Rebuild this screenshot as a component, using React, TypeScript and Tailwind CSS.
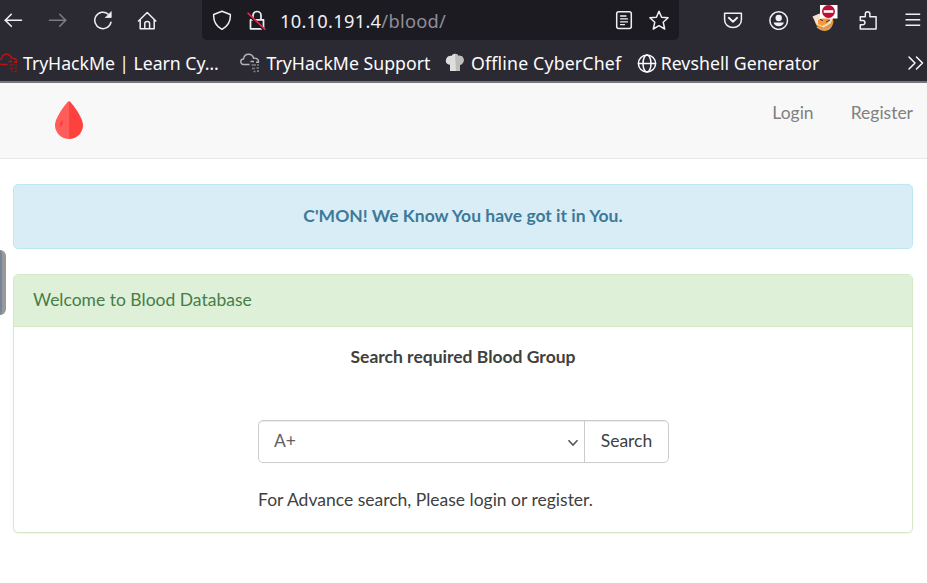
import type { ReactNode } from "react";

function Glyph({ children, className = "" }: { children: ReactNode; className?: string }) {
  return (
    <svg
      viewBox="0 0 20 20"
      fill="none"
      stroke="currentColor"
      strokeWidth="1.5"
      strokeLinecap="round"
      strokeLinejoin="round"
      className={`size-5 shrink-0 ${className}`}
    >
      {children}
    </svg>
  );
}

function Toolbar() {
  return (
    <div className="flex h-10 items-center pl-[3px] text-[#f0f0f4]">
      <Glyph>
        <path d="M18.5 10.3H2M8.300 4.300l-6 6 6 6" strokeWidth="1.6" />
      </Glyph>
      <Glyph className="ml-[25px] text-[#7d7b86]">
        <path d="M1.5 10.3H18M11.700 4.300l6 6-6 6" strokeWidth="1.6" />
      </Glyph>
      <Glyph className="ml-[25px]">
        <path d="M15.3 4.2A8.2 8.2 0 1 0 18 12.2" />
        <path d="M18.2 2v5.500h-5.500z" fill="currentColor" strokeWidth="0.8" />
      </Glyph>
      <Glyph className="ml-[24px]">
        <path d="M1.5 11 10.2 2.500l8.6 8.500M3.2 9.800v9h14v-9M7.800 18.600v-5.200c0-1.2.9-2 2.400-2s2.400.8 2.400 2v5.200" />
      </Glyph>
      <div className="ml-[45px] flex h-10 w-[477px] items-center rounded-b-[5px] bg-[#1c1b22] pl-[10px]">
        <Glyph>
          <path d="M10 1.2 18.300 4.5c.4 5.6-1.4 11-8.300 14.900C3.100 15.500 1.300 10.100 1.700 4.500Z" />
        </Glyph>
        <Glyph className="ml-[15px]">
          <path d="M6 9.300V5.500a4 4 0 0 1 8 0v3.800M3.500 9.800h13v9h-13z" strokeWidth="1.700" />
          <path d="M1 4.100 17 19.800" stroke="#1c1b22" strokeWidth="2.400" />
          <path d="M1 3.200 18 19.300" stroke="#e22850" strokeWidth="1.600" />
        </Glyph>
        <span className="mt-px ml-[13px] w-[334px] whitespace-nowrap text-[18.300px] tracking-[0.270px]">
          10.10.191.4<span className="text-[#8f8d98]">/blood/</span>
        </span>
        <Glyph>
          <rect x="2.700" y="1.800" width="14.600" height="16.700" rx="2" />
          <path d="M6.500 6h5.500M6.500 8.900h7M6.500 11.800h7M6.500 14.600h4" strokeWidth="1.300" />
        </Glyph>
        <Glyph className="ml-[15px]">
          <path d="m10 1.200 2.600 6 6.500.6-4.900 4.400 1.500 6.800L10 15.700 4.300 19l1.500-6.800L.9 7.800l6.500-.6Z" />
        </Glyph>
      </div>
      <Glyph className="ml-[44px]">
        <path d="M1.600 3.200h16.800v6.600c0 4.700-3.800 7.700-8.400 7.700s-8.400-3-8.400-7.700Z" />
        <path d="m5.800 7.800 4.200 4 4.200-4" strokeWidth="1.900" />
      </Glyph>
      <Glyph className="ml-[26px]">
        <circle cx="9.700" cy="10.600" r="8.800" />
        <circle cx="9.700" cy="8" r="3.200" fill="currentColor" stroke="none" />
        <path d="M4.500 12.500h10.400c-.6 2.400-2.700 3.700-5.200 3.700s-4.600-1.300-5.200-3.700Z" fill="currentColor" stroke="none" />
      </Glyph>
      <svg viewBox="0 0 26 28" className="-mt-[5px] ml-[23px] h-7 w-[26px] shrink-0">
        <path d="M2.500 16C4 23 8 27 12.500 27c5 0 8.500-4 9-10l-3-5-14-1Z" fill="#f0922e" />
        <path d="m.5 12.500 7-3 3 4 7-1 4 1-3 6-7 4-7-3Z" fill="#efe2cf" />
        <path d="m6 16 5-2 7-1-2 6-6 3-4-2Z" fill="#f79a35" />
        <path d="m8 15.500 3 1M14 18l4-2" stroke="#5b3a24" strokeWidth="1.100" />
        <path d="M5 23c3 3 10 4 14-1" stroke="#c9a37e" strokeWidth="1.400" fill="none" />
        <rect x="8" y="1" width="17.500" height="13.500" fill="#fff" />
        <circle cx="16.500" cy="7.500" r="6.500" fill="#c40d35" />
        <rect x="11.700" y="6.200" width="9.600" height="2.600" fill="#fff" />
      </svg>
      <Glyph className="ml-[20px]">
        <path d="M2.300 6.800h5V4a2.300 2.300 0 0 1 4.600 0v2.800h6.200v12.200H2.300v-4.200h2.500a2.100 2.100 0 0 0 0-4.200H2.300Z" />
      </Glyph>
      <Glyph className="ml-[25px]">
        <path d="M2.500 4.300h14.700M2.500 9.800h14.700M2.500 15.300h14.700" strokeLinecap="butt" />
      </Glyph>
    </div>
  );
}

function CloudMark({ className }: { className: string }) {
  return (
    <svg viewBox="0 0 20 20" fill="none" stroke="currentColor" strokeWidth="1.400" className={`h-5 w-5 shrink-0 ${className}`}>
      <path d="M9.500 11.500H3.500A2.700 2.700 0 0 1 3.500 6C4 3 6 1.200 8.500 1.200s4.500 1.500 5 4c3-.5 5 1 5.200 3.800" />
      <path d="M10.500 8.500h3.500M16 9.300h3" strokeWidth="1.500" />
      <path d="M11.500 12h4.500M17 12h2M12 15.500h3M16.500 15h2.500M13.500 18.500h2M17 18.200h2" strokeWidth="1.700" strokeOpacity="0.6" />
    </svg>
  );
}

function Bookmarks() {
  return (
    <div className="flex h-[43px] items-center whitespace-nowrap border-b-2 border-[#77757e] pt-[5px] text-[17.700px] text-[#fbfbfe]">
      <CloudMark className="-ml-[2px] text-[#c11111]" />
      <span className="ml-[5px] w-[218px] tracking-[-0.050px]">TryHackMe | Learn Cy…</span>
      <CloudMark className="text-[#b5b4bb]" />
      <span className="ml-[6px] w-[179px] tracking-[0.020px]">TryHackMe Support</span>
      <svg viewBox="0 0 20 20" className="h-5 w-5 shrink-0">
        <path d="M5 18v-6.200C1 11.500 0 8 1.500 5.300 3 2.700 5.500 2.500 6.500 3 8 0 12 0 13.500 3c2-.7 4.500.3 5 3 .5 3-1 5.500-3.500 5.800V18Z" fill="#dededc" />
        <path d="M10 .8c1.500 0 2.800.8 3.500 2.200 2-.7 4.500.3 5 3 .5 3-1 5.500-3.500 5.800V18h-4Z" fill="#bdbdbb" />
      </svg>
      <span className="ml-[6px] w-[166px] tracking-[0.180px]">Offline CyberChef</span>
      <Glyph>
        <circle cx="10" cy="10.500" r="8.600" />
        <ellipse cx="10" cy="10.500" rx="4" ry="8.600" />
        <path d="M1.500 10.500h17" />
      </Glyph>
      <span className="ml-[4px] w-[247px] tracking-[0.050px]">Revshell Generator</span>
      <Glyph>
        <path d="m2 4 6 6-6 6M9.500 4l6 6-6 6" />
      </Glyph>
    </div>
  );
}

function Navbar() {
  return (
    <nav className="flex h-[76px] items-start justify-between border-b border-[#e7e7e7] bg-[#f8f8f8] pr-[14px] pl-[55px]">
      <svg viewBox="0 0 28 38" className="mt-[18px] h-[38px] w-7">
        <path d="M14 0C12.500 0 0 16 0 24a14 14 0 0 0 14 14Z" fill="#ff5d5a" />
        <path d="M14 0c1.500 0 14 16 14 24a14 14 0 0 1-14 14Z" fill="#ff413d" />
        <path d="M7.500 19.500c-2 .5-3.200 3-2.500 5 .8 1.500 2 .7 2.400-.5.500-1.500 1.200-4 .1-4.500Z" fill="#ff413d" />
      </svg>
      <div className="mt-[18px] flex gap-[37px] leading-6 text-[#808080]">
        <a>Login</a>
        <a>Register</a>
      </div>
    </nav>
  );
}

export default function App() {
  return (
    <div className="h-[583px] w-[927px] overflow-hidden bg-white font-['Lato',sans-serif] text-[17.500px] text-[#404040]">
      <header className="bg-[#2b2a33] font-['Noto_Sans',sans-serif]">
        <Toolbar />
        <Bookmarks />
      </header>
      <Navbar />
      <main className="relative px-[13px] pt-[25px]">
        <div className="absolute top-[91px] left-0 h-[65px] w-[6px] rounded-r-[6px] border-r-4 border-[#999] bg-[#75849b]" />
        <div className="h-[65px] w-[900px] rounded-[5px] border border-[#bce8f1] bg-[#d9edf7] pt-[19px] text-center font-bold leading-6 text-[#3d7a98]">
          C'MON! We Know You have got it in You.
        </div>
        <section className="mt-[25px] h-[259px] w-[900px] overflow-hidden rounded-[5px] border border-[#d6e9c6] shadow-[0_1px_1px_rgba(0,0,0,0.05)]">
          <h3 className="h-[52px] border-b border-[#d6e9c6] bg-[#dff0d8] pt-[13px] pl-[19px] leading-6 text-[#467e47]">
            Welcome to Blood Database
          </h3>
          <div className="pt-[18px] text-center font-bold leading-6">Search required Blood Group</div>
          <div className="mt-[51px] ml-[244px] flex h-[43px] w-[411px] rounded-[5px] border border-[#ccc] shadow-[inset_0_1px_1px_rgba(0,0,0,0.075)]">
            <div className="flex w-[326px] items-center justify-between border-r border-[#ccc] pr-[5px] pl-[15px] text-[#606060]">
              <span>A+</span>
              <svg viewBox="0 0 12 8" fill="none" stroke="#555" strokeWidth="1.600" className="mt-[3px] h-2 w-3">
                <path d="m1.500 1.300 4.500 4.700 4.500-4.700" />
              </svg>
            </div>
            <button className="flex-1 text-center">Search</button>
          </div>
          <p className="mt-[25px] ml-[244px] leading-6">For Advance search, Please login or register.</p>
        </section>
      </main>
    </div>
  );
}
